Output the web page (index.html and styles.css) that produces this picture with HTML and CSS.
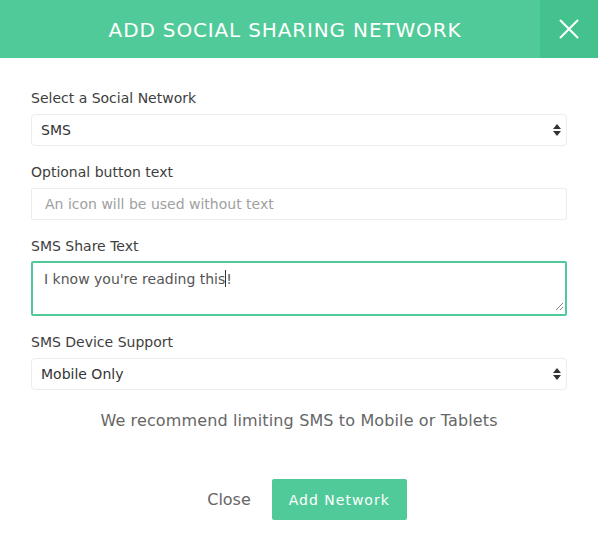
FILE: index.html
```html
<!DOCTYPE html>
<html>
<head>
<meta charset="utf-8">
<link rel="stylesheet" href="styles.css">
</head>
<body>
<div class="modal">
  <header class="modal-header">
    <div class="title">ADD SOCIAL SHARING NETWORK</div>
    <div class="close-x">
      <svg width="20" height="20" viewBox="0 0 20 20"><path d="M1 1 L19 19 M19 1 L1 19" stroke="#fff" stroke-width="2" fill="none"/></svg>
    </div>
  </header>
  <div class="modal-body">
    <div class="field">
      <div class="label">Select a Social Network</div>
      <div class="select">
        <span>SMS</span>
        <svg class="arrows" width="8" height="12" viewBox="0 0 8 12"><path d="M4 0 L8 5 L0 5 Z M0 7 L8 7 L4 12 Z" fill="#333"/></svg>
      </div>
    </div>
    <div class="field">
      <div class="label">Optional button text</div>
      <div class="input placeholder">An icon will be used without text</div>
    </div>
    <div class="field">
      <div class="label">SMS Share Text</div>
      <div class="textarea">
        <span>I know you're reading this<span class="caret"></span>!</span>
        <svg class="grip" width="9" height="9" viewBox="0 0 9 9"><path d="M8 1 L1 8 M8 5 L5 8" stroke="#888" stroke-width="1" fill="none"/></svg>
      </div>
    </div>
    <div class="field">
      <div class="label">SMS Device Support</div>
      <div class="select">
        <span>Mobile Only</span>
        <svg class="arrows" width="8" height="12" viewBox="0 0 8 12"><path d="M4 0 L8 5 L0 5 Z M0 7 L8 7 L4 12 Z" fill="#333"/></svg>
      </div>
    </div>
    <p class="note">We recommend limiting SMS to Mobile or Tablets</p>
    <div class="actions">
      <span class="close-link">Close</span>
      <span class="btn">Add Network</span>
    </div>
  </div>
</div>
</body>
</html>
```
FILE: styles.css
```css
* { box-sizing: border-box; }
html, body { margin: 0; padding: 0; background: #fff; }
body { font-family: "DejaVu Sans", Verdana, sans-serif; }
.modal { width: 598px; height: 556px; background: #fff; }
.modal-header {
  height: 58px;
  background: #51ca99;
  display: flex;
  align-items: stretch;
}
.title {
  flex: 1;
  display: flex;
  align-items: center;
  justify-content: center;
  padding-left: 30px;
  color: #fff;
  font-size: 20px;
  letter-spacing: 0.85px;
  padding-top: 1px;
}
.close-x {
  width: 58px;
  background: #44c28e;
  display: flex;
  align-items: center;
  justify-content: center;
}
.modal-body { padding: 30px 31px 0; }
.field { margin-bottom: 16px; }
.label {
  font-size: 14px;
  line-height: 20px;
  color: #3e3e3e;
  margin-bottom: 6px;
}
.select, .input {
  height: 32px;
  border: 1px solid #ececec;
  border-radius: 4px;
  display: flex;
  align-items: center;
  font-size: 14px;
  color: #333;
}
.select { justify-content: space-between; padding: 0 5px 0 9px; }
.input { padding-left: 13px; border-radius: 2px; }
.placeholder { color: #a0a0a0; }
.textarea {
  height: 55px;
  margin-top: -1px;
  border: 2px solid #51ca99;
  border-radius: 2px;
  padding: 7px 11px;
  font-size: 14px;
  color: #555;
  display: flex;
  justify-content: space-between;
  align-items: flex-start;
}
.grip { align-self: flex-end; margin-right: -10px; margin-bottom: -4px; }
.caret { display: inline-block; width: 1px; height: 17px; background: #333; vertical-align: -3px; }
.note {
  margin: 17px 0 0;
  text-align: center;
  font-size: 16px;
  letter-spacing: 0.13px;
  color: #666;
  line-height: 28px;
}
.actions {
  margin-top: 44px;
  padding-left: 16px;
  display: flex;
  justify-content: center;
  align-items: center;
  gap: 21px;
}
.close-link { font-size: 16px; color: #666; }
.btn {
  background: #51ca99;
  color: #fff;
  font-size: 14px;
  letter-spacing: 1px;
  height: 41px;
  width: 135px;
  border-radius: 2px;
  display: flex;
  align-items: center;
  justify-content: center;
}
```
